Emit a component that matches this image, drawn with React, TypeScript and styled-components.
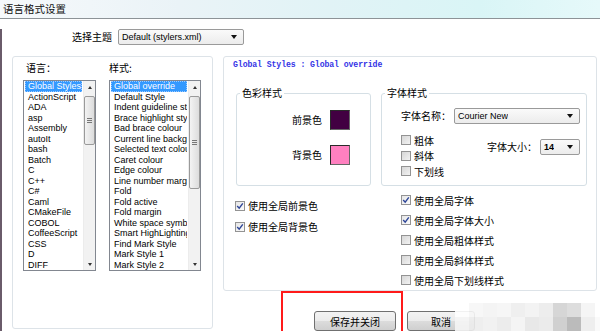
import React from 'react';
import styled, { createGlobalStyle } from 'styled-components';

const CJK = '"Noto Sans CJK SC", "Liberation Sans", sans-serif';
const UI = '"Liberation Sans", "Noto Sans CJK SC", sans-serif';

const GlobalStyle = createGlobalStyle`
  html, body { margin:0; padding:0; background:#fff; }
  body { width:600px; height:331px; overflow:hidden; font-family:${UI}; color:#000; }
  * { box-sizing:border-box; }
`;

const languages = [
  'Global Styles', 'ActionScript', 'ADA', 'asp', 'Assembly', 'autoIt', 'bash', 'Batch', 'C', 'C++',
  'C#', 'Caml', 'CMakeFile', 'COBOL', 'CoffeeScript', 'CSS', 'D', 'DIFF',
];

const styles = [
  'Global override', 'Default Style', 'Indent guideline style', 'Brace highlight style', 'Bad brace colour',
  'Current line background colour', 'Selected text colour', 'Caret colour', 'Edge colour',
  'Line number margin', 'Fold', 'Fold active', 'Fold margin', 'White space symbol', 'Smart HighLighting',
  'Find Mark Style', 'Mark Style 1', 'Mark Style 2',
];

const mosaic = [
  ['#fff', '#f7f7f7', '#f3f3f3', '#f6f6f6', '#eeeeee', '#f2f2f2', '#ececec', '#d2d2d2', '#dadada', '#f4f4f4', '#fff'],
  ['#f5f5f5', '#ededed', '#f0f0f0', '#eaeaea', '#f3f3f3', '#e6e6e6', '#e9e9e9', '#cbcbcb', '#b4b4b4', '#ededed', '#fafafa'],
  ['#f2f2f2', '#f6f6f6', '#ebebeb', '#f1f1f1', '#e8e8e8', '#efefef', '#e4e4e4', '#dedede', '#bdbdbd', '#f0f0f0', '#fff'],
];

function Check() {
  return (
    <svg width="8" height="8" viewBox="0 0 8 8">
      <path d="M1.2 4 L3.2 6.2 L6.8 1.4" fill="none" stroke="#2d4597" strokeWidth="1.4" />
    </svg>
  );
}

function CheckItem({ label, checked }: { label: string; checked?: boolean }) {
  return (
    <CheckRow>
      <Box $checked={checked}>{checked && <Check />}</Box>
      <span>{label}</span>
    </CheckRow>
  );
}

function Combo({ value, width, bold }: { value: string; width: number; bold?: boolean }) {
  return (
    <Select style={{ width }} $bold={bold}>
      <span>{value}</span>
      <Arrow />
    </Select>
  );
}

function ListBox({ items, width, thumb }: { items: string[]; width: number; thumb: number }) {
  return (
    <List style={{ width }}>
      <Items>
        {items.map((it, i) => (
          <Item key={it} $selected={i === 0}>{it}</Item>
        ))}
      </Items>
      <ScrollBar>
        <ScrollBtn><Tri $up /></ScrollBtn>
        <Track>
          <Thumb style={{ height: thumb }}>
            <Grip />
          </Thumb>
        </Track>
        <ScrollBtn><Tri /></ScrollBtn>
      </ScrollBar>
    </List>
  );
}

export default function App() {
  return (
    <Page>
      <GlobalStyle />
      <TitleBar>语言格式设置</TitleBar>
      <Window>
        <ThemeRow>
          <Label>选择主题</Label>
          <Combo value="Default (stylers.xml)" width={126} />
        </ThemeRow>
        <Body>
          <LeftPanel>
            <Column>
              <ColLabel>语言：</ColLabel>
              <ListBox items={languages} width={73} thumb={49} />
            </Column>
            <Column>
              <ColLabel $flush>样式:</ColLabel>
              <ListBox items={styles} width={92} thumb={93} />
            </Column>
          </LeftPanel>
          <RightCol>
            <RightPanel>
              <StyleTitle>Global Styles : Global override</StyleTitle>
              <Groups>
                <ColorGroup>
                  <Legend $shift={3}>色彩样式</Legend>
                  <SwatchRow>
                    <Label>前景色</Label>
                    <Swatch $color="#420042" />
                  </SwatchRow>
                  <SwatchRow>
                    <Label>背景色</Label>
                    <Swatch $color="#ff80c0" />
                  </SwatchRow>
                </ColorGroup>
                <FontGroup>
                  <Legend $shift={-16}>字体样式</Legend>
                  <FontNameRow>
                    <Label>字体名称：</Label>
                    <Combo value="Courier New" width={126} />
                  </FontNameRow>
                  <FontBottom>
                    <SmallChecks>
                      <CheckItem label="粗体" />
                      <CheckItem label="斜体" />
                      <CheckItem label="下划线" />
                    </SmallChecks>
                    <SizeRow>
                      <Label>字体大小：</Label>
                      <Combo value="14" width={40} bold />
                    </SizeRow>
                  </FontBottom>
                </FontGroup>
              </Groups>
              <Options>
                <LeftOpts>
                  <CheckItem label="使用全局前景色" checked />
                  <CheckItem label="使用全局背景色" checked />
                </LeftOpts>
                <RightOpts>
                  <CheckItem label="使用全局字体" checked />
                  <CheckItem label="使用全局字体大小" checked />
                  <CheckItem label="使用全局粗体样式" />
                  <CheckItem label="使用全局斜体样式" />
                  <CheckItem label="使用全局下划线样式" />
                </RightOpts>
              </Options>
            </RightPanel>
            <ButtonRow>
              <Highlight>
                <Button style={{ width: 82 }}>保存并关闭</Button>
              </Highlight>
              <Button style={{ width: 68, marginTop: 20 }}>取消</Button>
            </ButtonRow>
          </RightCol>
        </Body>
      </Window>
      <Mosaic>
        {mosaic.map((row, r) => row.map((c, i) => <Cell key={`${r}-${i}`} $color={c} />))}
      </Mosaic>
    </Page>
  );
}

const Page = styled.div`
  position:relative;
  width:600px;
  height:331px;
  overflow:hidden;
  background:#fff;
`;

const TitleBar = styled.div`
  height:19px;
  display:flex;
  align-items:center;
  padding:0 0 1px 3px;
  font-family:${CJK};
  font-size:10.5px;
  color:#111;
  border-bottom:1px solid #8d9397;
  background:linear-gradient(90deg, #f6f9fb 0%, #eaf3f7 30%, #e1f3f6 55%, #d9f5f6 80%, #e6f9fa 100%);
`;

const Window = styled.div`
  height:312px;
  border-left:2px solid #6a5b6a;
  background:#fff;
`;

const ThemeRow = styled.div`
  display:flex;
  align-items:center;
  gap:6px;
  height:16px;
  margin-top:10px;
  padding-left:70px;
`;

const Label = styled.span`
  font-family:${CJK};
  font-size:10px;
  line-height:14px;
  white-space:nowrap;
`;

const Select = styled.div<{ $bold?: boolean }>`
  flex:none;
  height:16px;
  display:flex;
  align-items:center;
  justify-content:space-between;
  padding:0 6px 0 3px;
  border:1px solid #9a9a9a;
  border-radius:2px;
  background:linear-gradient(#fafafa, #ececec);
  font-family:${UI};
  font-size:9px;
  font-weight:${p => (p.$bold ? 'bold' : 'normal')};
  white-space:nowrap;
  span{ overflow:hidden; }
`;

const Arrow = styled.i`
  flex:none;
  width:0;
  height:0;
  border-left:3.5px solid transparent;
  border-right:3.5px solid transparent;
  border-top:4px solid #111;
`;

const Body = styled.div`
  display:grid;
  grid-template-columns:201px 374px;
  column-gap:10px;
  align-items:start;
  margin:11px 0 0 10px;
`;

const LeftPanel = styled.div`
  height:273px;
  display:flex;
  gap:13px;
  padding:4px 0 0 10px;
  border:1px solid #dde3e8;
  border-radius:3px;
`;

const Column = styled.div`
  display:flex;
  flex-direction:column;
`;

const ColLabel = styled.div<{ $flush?: boolean }>`
  font-family:${CJK};
  font-size:10px;
  line-height:14px;
  height:19px;
  padding-left:${p => (p.$flush ? 0 : 3)}px;
`;

const List = styled.div`
  height:191px;
  display:flex;
  border:1px solid #828790;
  background:#fff;
`;

const Items = styled.div`
  flex:1;
  min-width:0;
  overflow:hidden;
`;

const Item = styled.div<{ $selected?: boolean }>`
  height:10.5px;
  line-height:10.5px;
  font-size:9px;
  padding-left:3px;
  margin:0 1px;
  white-space:nowrap;
  overflow:hidden;
  color:${p => (p.$selected ? '#fff' : '#000')};
  background:${p => (p.$selected ? '#3399ff' : 'transparent')};
  outline:${p => (p.$selected ? '1px dotted #9ccaff' : 'none')};
  outline-offset:-1px;
`;

const ScrollBar = styled.div`
  width:12px;
  display:flex;
  flex-direction:column;
  background:#f2f2f2;
  border-left:1px solid #ececec;
`;

const ScrollBtn = styled.div`
  height:12px;
  display:flex;
  align-items:center;
  justify-content:center;
`;

const Tri = styled.i<{ $up?: boolean }>`
  width:0;
  height:0;
  border-left:2.5px solid transparent;
  border-right:2.5px solid transparent;
  ${p => (p.$up ? 'border-bottom:3px solid #333;' : 'border-top:3px solid #333;')}
`;

const Track = styled.div`
  flex:1;
  padding-top:3px;
`;

const Thumb = styled.div`
  display:flex;
  align-items:center;
  justify-content:center;
  border:1px solid #9a9a9a;
  border-radius:2px;
  background:linear-gradient(90deg, #f3f3f3, #dcdcdc);
`;

const Grip = styled.div`
  width:5px;
  height:5px;
  border-top:1px solid #777;
  border-bottom:1px solid #777;
  &::after{
    content:'';
    display:block;
    margin-top:1px;
    height:1px;
    background:#777;
  }
`;

const RightCol = styled.div`
  display:flex;
  flex-direction:column;
`;

const RightPanel = styled.div`
  height:235px;
  display:flex;
  flex-direction:column;
  border:1px solid #dde3e8;
  border-radius:3px;
`;

const StyleTitle = styled.div`
  height:17px;
  padding:2px 0 0 9px;
  font-family:"Liberation Mono", monospace;
  font-size:8.2px;
  line-height:12px;
  font-weight:bold;
  color:#3434e6;
  letter-spacing:-0.1px;
`;

const Groups = styled.div`
  display:flex;
  gap:10px;
  margin:13px 0 0 12px;
`;

const Group = styled.fieldset`
  margin:0;
  border:1px solid #d5dfe5;
  border-radius:3px;
  min-width:0;
`;

const Legend = styled.legend<{ $shift: number }>`
  margin-left:${p => p.$shift}px;
  padding:0 2px;
  font-family:${CJK};
  font-size:10px;
  line-height:14px;
`;

const ColorGroup = styled(Group)`
  width:135px;
  height:100px;
  padding:10px 20px 0 0;
  display:flex;
  flex-direction:column;
  gap:15px;
`;

const SwatchRow = styled.div`
  display:flex;
  align-items:center;
  justify-content:flex-end;
  gap:8px;
`;

const Swatch = styled.div<{ $color: string }>`
  width:20px;
  height:20px;
  background:${p => p.$color};
  border:1px solid #2a2a2a;
  border-right-color:#666;
  border-bottom-color:#666;
`;

const FontGroup = styled(Group)`
  width:206px;
  height:100px;
  padding:8px 6px 0 19px;
`;

const FontNameRow = styled.div`
  display:flex;
  align-items:center;
  justify-content:flex-end;
  gap:3px;
`;

const FontBottom = styled.div`
  display:flex;
  justify-content:space-between;
  align-items:flex-start;
  margin-top:9px;
`;

const SmallChecks = styled.div`
  display:flex;
  flex-direction:column;
  gap:1px;
  & > div{ height:14.5px; }
`;

const SizeRow = styled.div`
  display:flex;
  align-items:center;
  gap:3px;
  margin-top:6px;
`;

const CheckRow = styled.div`
  display:flex;
  align-items:center;
  gap:3px;
  font-family:${CJK};
  font-size:10px;
  white-space:nowrap;
`;

const Box = styled.span<{ $checked?: boolean }>`
  flex:none;
  width:10px;
  height:10px;
  display:flex;
  align-items:center;
  justify-content:center;
  border:1px solid #939393;
  background:${p => (p.$checked
    ? 'linear-gradient(135deg, #e6e6e6, #fbfbfb)'
    : 'linear-gradient(135deg, #d6d6d6, #f2f2f2)')};
`;

const Options = styled.div`
  display:flex;
  margin:4px 0 0 11px;
`;

const LeftOpts = styled.div`
  width:166px;
  padding-top:5px;
  & > div{ height:21px; }
`;

const RightOpts = styled.div`
  & > div{ height:20px; }
`;

const ButtonRow = styled.div`
  display:flex;
  align-items:flex-start;
  gap:4px;
  margin-left:58px;
`;

const Highlight = styled.div`
  height:50px;
  padding:18px 5px 0 31px;
  border:2px solid #ff1a1a;
`;

const Button = styled.div`
  height:20px;
  display:flex;
  align-items:center;
  justify-content:center;
  font-family:${CJK};
  font-size:10px;
  border:1px solid #707070;
  border-radius:3px;
  background:linear-gradient(#f3f3f3 0%, #ebebeb 50%, #dcdcdc 51%, #cfcfcf 100%);
`;

const Mosaic = styled.div`
  position:absolute;
  left:455px;
  top:303px;
  display:grid;
  grid-template-columns:repeat(11, 14px);
  grid-auto-rows:14px;
  opacity:0.9;
`;

const Cell = styled.div<{ $color: string }>`
  background:${p => p.$color};
`;
